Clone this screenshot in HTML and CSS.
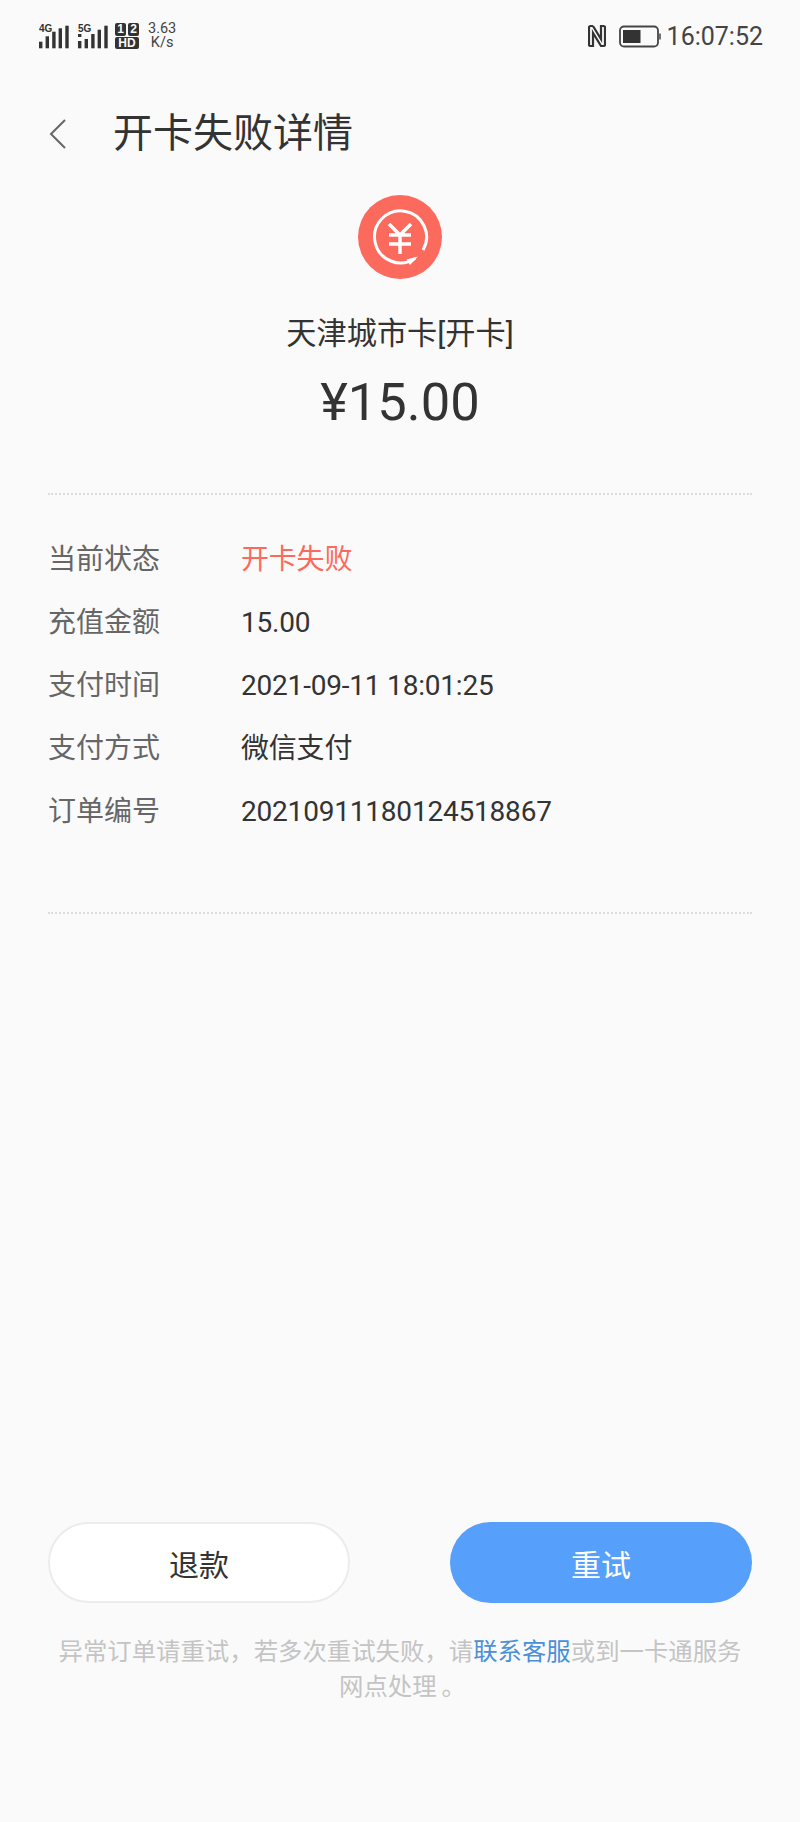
FILE: index.html
```html
<!DOCTYPE html>
<html lang="zh-CN">
<head>
  <meta charset="UTF-8" />
  <title>开卡失败详情</title>
  <link rel="stylesheet" href="styles.css">
</head>
<body>

  <div class="status-bar">
    <div class="status-left">
      <svg class="signal" width="30" height="26" viewBox="0 0 30 26">
        <rect x="0" y="18.700" width="3.400" height="6.600" />
        <rect x="6.600" y="13.300" width="3.400" height="12" />
        <rect x="13.200" y="8.700" width="3.400" height="16.600" />
        <rect x="19.600" y="5.300" width="3.400" height="20" />
        <rect x="26.300" y="2.700" width="3.400" height="22.600" />
        <text x="0" y="8.500" class="signal-text">4G</text>
      </svg>
      <svg class="signal signal-5g" width="30" height="26" viewBox="0 0 30 26">
        <rect x="0" y="11" width="3.400" height="3" />
        <rect x="0" y="18" width="3.400" height="7.300" />
        <rect x="6.600" y="16" width="3.400" height="9.300" />
        <rect x="13.200" y="11" width="3.400" height="14.300" />
        <rect x="19.600" y="6.700" width="3.400" height="18.600" />
        <rect x="26.300" y="2.700" width="3.400" height="22.600" />
        <text x="0" y="8.500" class="signal-text">5G</text>
      </svg>
      <div class="hd">
        <div class="hd-top"><span>1</span><span>2</span></div>
        <div class="hd-bottom">HD</div>
      </div>
      <div class="speed">3.63<br>K/s</div>
    </div>
    <div class="status-right">
      <svg class="nfc" width="18" height="24" viewBox="0 0 18 24" fill="none" stroke="#333" stroke-width="2.200">
        <path d="M5 2H2.500Q1 2 1 3.500V20.500Q1 22 2.500 22H5V9L13 22H15.500Q17 22 17 20.500V3.500Q17 2 15.500 2H13V15L5 2" />
      </svg>
      <svg class="battery" width="42" height="24" viewBox="0 0 42 24" fill="none">
        <rect x="1" y="2.500" width="38" height="20" rx="4" stroke="#444" stroke-width="1.800" />
        <rect x="4" y="6" width="17.500" height="13" fill="#333" />
        <path d="M41 9.500v6" stroke="#444" stroke-width="1.500" />
      </svg>
      <span class="clock">16:07:52</span>
    </div>
  </div>

  <div class="title-bar">
    <svg class="back" width="20" height="32" viewBox="0 0 20 32" fill="none" stroke="#666" stroke-width="2">
      <path d="M17 2L3 16L17 30" />
    </svg>
    <h1>开卡失败详情</h1>
  </div>

  <div class="summary">
    <svg class="logo" width="84" height="84" viewBox="0 0 84 84">
      <circle cx="42" cy="42" r="42" fill="#fb6a5c" />
      <path d="M65 55A26 26 0 1 0 57 63.500" fill="none" stroke="#fff" stroke-width="3" />
      <path d="M60 61.500L52 70L48.500 64.500Z" fill="#fff" />
      <path d="M31 29L42 40L53 29M31 40H53M31 49H53M42 40V59" fill="none" stroke="#fff" stroke-width="3.500" />
    </svg>
    <div class="card-name">天津城市卡[开卡]</div>
    <div class="amount">¥15.00</div>
  </div>

  <div class="details">
    <div class="row"><span class="label">当前状态</span><span class="value failed">开卡失败</span></div>
    <div class="row"><span class="label">充值金额</span><span class="value">15.00</span></div>
    <div class="row"><span class="label">支付时间</span><span class="value">2021-09-11 18:01:25</span></div>
    <div class="row"><span class="label">支付方式</span><span class="value">微信支付</span></div>
    <div class="row"><span class="label">订单编号</span><span class="value">20210911180124518867</span></div>
  </div>

  <div class="footer">
    <div class="buttons">
      <button class="btn btn-refund">退款</button>
      <button class="btn btn-retry">重试</button>
    </div>
    <div class="note">
      <div>异常订单请重试，若多次重试失败，请<a>联系客服</a>或到一卡通服务</div>
      <div>网点处理<span class="period">。</span></div>
    </div>
  </div>

</body>
</html>
```

FILE: styles.css
```css
html, body {
  margin: 0;
  padding: 0;
}

body {
  width: 800px;
  height: 1822px;
  background: #fafafa;
  color: #333;
  font-family: Roboto, "Noto Sans CJK SC", sans-serif;
  display: flex;
  flex-direction: column;
  overflow: hidden;
}

.status-bar {
  height: 72px;
  padding: 0 37px 0 39px;
  display: flex;
  justify-content: space-between;
  align-items: center;
}

.status-left, .status-right {
  display: flex;
  align-items: center;
}

.signal {
  margin-right: 9px;
  fill: #333;
}

.signal-5g {
  margin-right: 7px;
}

.signal-text {
  font-family: "Liberation Sans", sans-serif;
  font-size: 10px;
  font-weight: bold;
}

.hd {
  width: 24px;
  margin-right: 9px;
  font-family: "Liberation Sans", sans-serif;
  font-size: 12px;
  font-weight: bold;
  line-height: 13px;
  color: #fafafa;
  text-align: center;
}

.hd-top {
  display: flex;
  gap: 2px;
}

.hd-top span {
  flex: 1;
  background: #333;
  border-radius: 2px;
}

.hd-bottom {
  margin-top: 1px;
  background: #333;
  border-radius: 2px;
  line-height: 12px;
}

.speed {
  font-size: 14.500px;
  line-height: 14px;
  text-align: center;
  color: #444;
}

.nfc {
  margin-right: 13px;
}

.battery {
  margin-right: 6px;
}

.clock {
  font-size: 25px;
  line-height: 30px;
  margin-top: 1px;
  color: #444;
}

.title-bar {
  height: 64px;
  margin-top: 30px;
  padding-left: 48px;
  display: flex;
  align-items: center;
}

.back {
  flex: none;
}

h1 {
  margin: 0 0 0 45px;
  font-size: 40px;
  line-height: 56px;
  font-weight: normal;
  color: #333;
}

.summary {
  margin: 0 48px;
  padding-top: 8px;
  height: 329px;
  box-sizing: border-box;
  border-bottom: 2px dotted #ddd;
  display: flex;
  flex-direction: column;
  align-items: center;
}

.logo {
  margin-top: 21px;
}

.card-name {
  margin-top: 31px;
  font-size: 30.200px;
  line-height: 48px;
  color: #333;
}

.amount {
  margin-top: 12px;
  font-size: 52.500px;
  line-height: 64px;
  color: #333;
}

.details {
  margin: 0 48px;
  height: 419px;
  padding-top: 33px;
  box-sizing: border-box;
  border-bottom: 2px dotted #ddd;
}

.row {
  height: 63px;
  display: flex;
  align-items: center;
  font-size: 28px;
  line-height: 40px;
}

.label {
  width: 193px;
  color: #666;
}

.value {
  color: #333;
  letter-spacing: -0.2px;
}

.failed {
  color: #fb6a5c;
}

.footer {
  margin-top: auto;
  padding: 0 48px 118px;
}

.buttons {
  display: flex;
  justify-content: space-between;
}

.btn {
  width: 302px;
  height: 81px;
  border-radius: 41px;
  font-family: inherit;
  font-size: 30px;
}

.btn-refund {
  background: #fff;
  border: 2px solid #ececec;
  color: #333;
}

.btn-retry {
  background: #569ffb;
  border: none;
  color: #fff;
}

.note {
  margin-top: 31px;
  font-size: 24.400px;
  line-height: 35px;
  color: #c4c4c4;
  text-align: center;
  white-space: nowrap;
}

.note a {
  color: #4a90d9;
}

.period {
  margin: 0 -5px 0 5px;
}
```
